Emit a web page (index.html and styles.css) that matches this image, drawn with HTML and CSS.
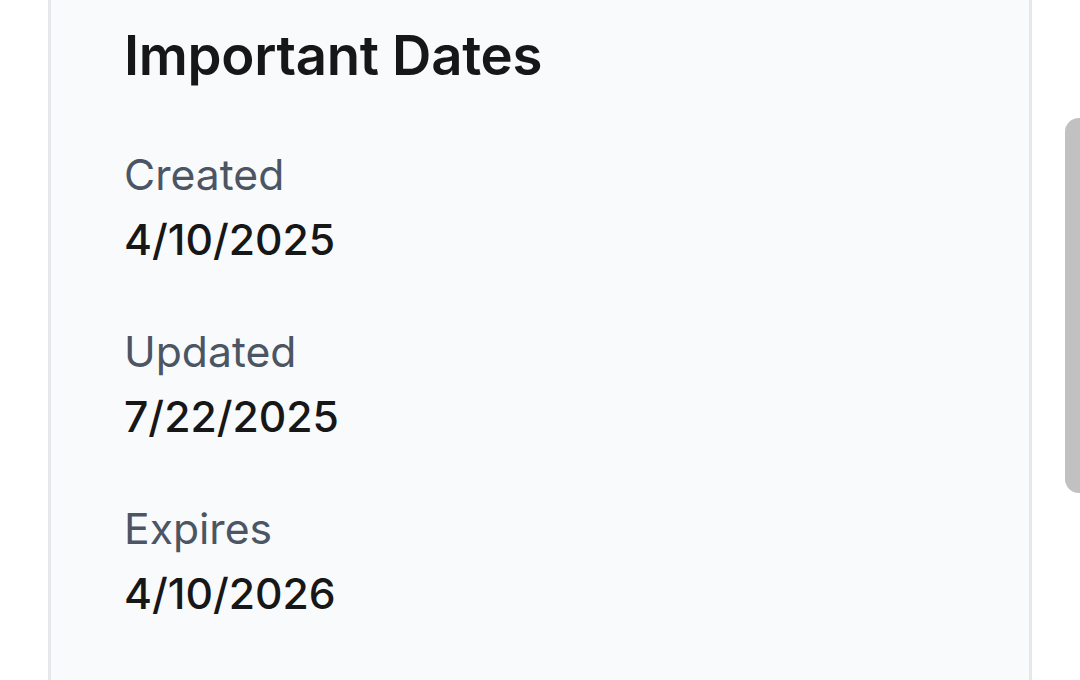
FILE: index.html
```
<!DOCTYPE html>
<html lang="en">
<head>
<meta charset="utf-8">
<title>Important Dates</title>
<link rel="stylesheet" href="styles.css">
</head>
<body>
<main class="page">
  <section class="card">
    <h2 class="card-title">Important Dates</h2>
    <dl class="dates">
      <div class="date-item">
        <dt class="date-label">Created</dt>
        <dd class="date-value">4/10/2025</dd>
      </div>
      <div class="date-item">
        <dt class="date-label">Updated</dt>
        <dd class="date-value">7/22/2025</dd>
      </div>
      <div class="date-item">
        <dt class="date-label">Expires</dt>
        <dd class="date-value">4/10/2026</dd>
      </div>
    </dl>
  </section>
</main>
<div class="scroll-thumb"></div>
</body>
</html>
```
FILE: styles.css
```
* { box-sizing: border-box; }
html, body {
  margin: 0;
  padding: 0;
  height: 100%;
  overflow: hidden;
  background: #ffffff;
  font-family: Inter, "Noto Sans", sans-serif;
}
.page {
  padding: 0 48px 0 48px;
  width: 1080px;
  height: 680px;
}
.card {
  width: 984px;
  min-height: 700px;
  background: #f9fafb;
  border: 3px solid #e5e7eb;
  border-top: 0;
  padding: 20px 72px 0 73px;
}
.card-title {
  margin: 0;
  font-size: 54.5px;
  line-height: 70px;
  font-weight: 600;
  color: #171717;
  letter-spacing: -0.3px;
}
.dates {
  margin: 55px 0 0 0;
  display: flex;
  flex-direction: column;
  gap: 52px;
}
.date-item {
  display: flex;
  flex-direction: column;
}
.date-label {
  font-size: 42.67px;
  line-height: 60px;
  font-weight: 400;
  color: #4b5563;
}
.date-value {
  margin: 0;
  padding-top: 5px;
  font-size: 42.67px;
  line-height: 60px;
  font-weight: 500;
  color: #171717;
}
.scroll-thumb {
  position: fixed;
  left: 1065px;
  top: 118px;
  width: 15px;
  height: 375px;
  background: #c1c1c1;
  border-radius: 14px 0 0 14px;
}
```
